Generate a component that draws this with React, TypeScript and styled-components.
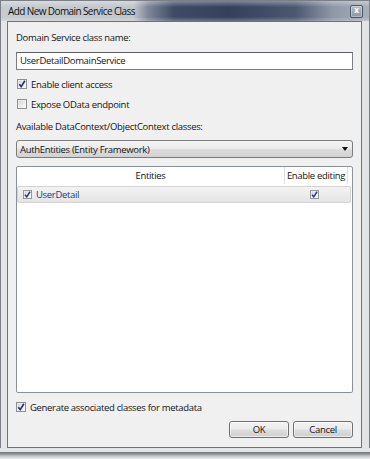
import React from 'react';
import styled, { createGlobalStyle } from 'styled-components';

const GlobalStyle = createGlobalStyle`
  html, body {
    margin: 0;
    padding: 0;
    background: #ffffff;
  }
  body {
    font-family: "Open Sans", "Noto Sans", sans-serif;
    color: #141414;
  }
`;

const Window = styled.div`
  width: 370px;
  height: 459px;
  box-sizing: border-box;
  display: flex;
  flex-direction: column;
  border: 1px solid #7b8088;
  border-bottom: none;
  background: #dcdfe3;
`;

const TitleBar = styled.div`
  height: 20px;
  flex: none;
  display: flex;
  align-items: center;
  justify-content: space-between;
  padding: 0 6px 0 7px;
  background:
    linear-gradient(to bottom, rgba(255, 255, 255, 0.35), rgba(255, 255, 255, 0) 30%, rgba(0, 0, 0, 0) 80%, rgba(255, 255, 255, 0.25)),
    linear-gradient(to right, #c6cbd0 0%, #c1c6cc 36%, #7d879a 40%, #3f4b66 47%, #34405c 62%, #4c5872 80%, #8e97a6 90%, #a9b0ba 100%);
`;

const Title = styled.span`
  font-size: 10px;
  letter-spacing: -0.6px;
  color: #101010;
  line-height: 20px;
`;

const CloseButton = styled.div`
  width: 13px;
  height: 13px;
  box-sizing: border-box;
  border: 1px solid #4a5464;
  border-radius: 2px;
  display: flex;
  align-items: center;
  justify-content: center;
  background: linear-gradient(to bottom, #b4bcc8, #8a95a6);
  box-shadow: inset 0 0 0 1px rgba(255, 255, 255, 0.35);
  color: #ffffff;
  font-family: "DejaVu Sans", sans-serif;
  font-size: 8px;
  font-weight: bold;
  line-height: 1;
`;

const Frame = styled.div`
  flex: 1;
  display: flex;
  padding: 0 7px 0 6px;
  background: linear-gradient(to right, #e4e6e8, #d9dce0 40%, #d9dce0 60%, #e2e4e6);
`;

const BottomEdge = styled.div`
  height: 11px;
  flex: none;
  margin: 0 -1px;
  background: linear-gradient(
    to bottom,
    #e2e4e6 0,
    #e2e4e6 4px,
    #6f737a 4px,
    #8d9096 6px,
    #c4c5c7 8px,
    #eeeeee 11px
  );
`;

const Client = styled.div`
  flex: 1;
  display: flex;
  flex-direction: column;
  box-sizing: border-box;
  border: 1px solid #6e737a;
  background: #f0f0f0;
  padding: 0 8px 0 8px;
  font-size: 9.5px;
  letter-spacing: -0.32px;
`;

const Label = styled.div<{ $top: number }>`
  height: 14px;
  line-height: 14px;
  margin-top: ${p => p.$top}px;
  white-space: nowrap;
`;

const TextBox = styled.div`
  height: 18px;
  box-sizing: border-box;
  margin-top: 7px;
  border: 1px solid #7a7e84;
  border-top-color: #5c6066;
  background: #ffffff;
  padding-left: 3px;
  line-height: 16px;
`;

const CheckRow = styled.label<{ $top: number; $indent: number }>`
  display: flex;
  align-items: center;
  gap: 4px;
  height: 12px;
  margin-top: ${p => p.$top}px;
  padding-left: ${p => p.$indent}px;
  white-space: nowrap;
`;

const Combo = styled.div`
  height: 18px;
  box-sizing: border-box;
  margin-top: 6px;
  border: 1px solid #7c7c7c;
  border-radius: 3px;
  background: linear-gradient(to bottom, #f4f4f4 0%, #ebebeb 48%, #dddddd 52%, #d2d2d2 100%);
  display: flex;
  align-items: center;
  justify-content: space-between;
  padding: 0 4px 0 3px;
`;

const ComboArrow = styled.div`
  width: 0;
  height: 0;
  border-left: 3px solid transparent;
  border-right: 3px solid transparent;
  border-top: 4px solid #101010;
`;

const ListBox = styled.div`
  height: 227px;
  box-sizing: border-box;
  margin-top: 8px;
  border: 1px solid #8c9198;
  border-radius: 2px;
  background: #ffffff;
  display: flex;
  flex-direction: column;
`;

const HeaderRow = styled.div`
  display: flex;
  height: 17px;
  flex: none;
  padding-right: 4px;
`;

const HeaderCell = styled.div<{ $width?: number }>`
  ${p => (p.$width ? `width: ${p.$width}px;` : 'flex: 1;')}
  box-sizing: border-box;
  display: flex;
  align-items: center;
  justify-content: center;
  border-right: 1px solid #dcdcdc;
  white-space: nowrap;
  line-height: 17px;
`;

const EntityRow = styled.div`
  height: 17px;
  box-sizing: border-box;
  margin: 2px 1px 0 0;
  border: 1px solid #d4d4d4;
  border-radius: 2px;
  background: linear-gradient(to bottom, #f3f3f3, #e4e4e4);
  display: flex;
  align-items: center;
`;

const EntityName = styled.div`
  flex: 1;
  display: flex;
  align-items: center;
  gap: 4px;
  padding-left: 5px;
  color: #22378c;
`;

const EditCell = styled.div`
  width: 63px;
  display: flex;
  justify-content: center;
  padding-right: 4px;
`;

const ButtonBar = styled.div`
  display: flex;
  justify-content: flex-end;
  gap: 4px;
  margin-top: 8px;
`;

const Button = styled.button`
  width: 60px;
  height: 17px;
  box-sizing: border-box;
  padding: 0;
  border: 1px solid #707070;
  border-radius: 3px;
  background: linear-gradient(to bottom, #f2f2f2 0%, #ebebeb 48%, #dddddd 52%, #cfcfcf 100%);
  box-shadow: inset 0 0 0 1px rgba(255, 255, 255, 0.6);
  font-family: inherit;
  font-size: 9.5px;
  letter-spacing: -0.32px;
  color: #141414;
`;

const CheckBox: React.FC<{ checked?: boolean; size?: number }> = ({ checked = false, size = 10 }) => (
  <svg width={size} height={size} viewBox="0 0 10 10" style={{ flex: 'none' }}>
    <defs>
      <linearGradient id="cbfill" x1="0" y1="0" x2="1" y2="1">
        <stop offset="0" stopColor="#d6d6d6" />
        <stop offset="1" stopColor="#fbfbfb" />
      </linearGradient>
    </defs>
    <rect x="0.5" y="0.5" width="9" height="9" fill="#f6f6f6" stroke="#8e8f8f" />
    <rect x="1.5" y="1.5" width="7" height="7" fill="url(#cbfill)" />
    {checked && (
      <path d="M2.3 5.2 L4.2 7.6 L7.9 1.8" fill="none" stroke="#1f2f7c" strokeWidth="1.6" />
    )}
  </svg>
);

const App: React.FC = () => (
  <>
    <GlobalStyle />
    <Window>
      <TitleBar>
        <Title>Add New Domain Service Class</Title>
        <CloseButton>x</CloseButton>
      </TitleBar>
      <Frame>
        <Client>
          <Label $top={9}>Domain Service class name:</Label>
          <TextBox>UserDetailDomainService</TextBox>
          <CheckRow $top={8} $indent={1}>
            <CheckBox checked />
            Enable client access
          </CheckRow>
          <CheckRow $top={8} $indent={1}>
            <CheckBox />
            Expose OData endpoint
          </CheckRow>
          <Label $top={10}>Available DataContext/ObjectContext classes:</Label>
          <Combo>
            <span>AuthEntities (Entity Framework)</span>
            <ComboArrow />
          </Combo>
          <ListBox>
            <HeaderRow>
              <HeaderCell>Entities</HeaderCell>
              <HeaderCell $width={63}>Enable editing</HeaderCell>
            </HeaderRow>
            <EntityRow>
              <EntityName>
                <CheckBox checked size={9} />
                UserDetail
              </EntityName>
              <EditCell>
                <CheckBox checked size={9} />
              </EditCell>
            </EntityRow>
          </ListBox>
          <CheckRow $top={8} $indent={0}>
            <CheckBox checked />
            Generate associated classes for metadata
          </CheckRow>
          <ButtonBar>
            <Button>OK</Button>
            <Button>Cancel</Button>
          </ButtonBar>
        </Client>
      </Frame>
      <BottomEdge />
    </Window>
  </>
);

export default App;
